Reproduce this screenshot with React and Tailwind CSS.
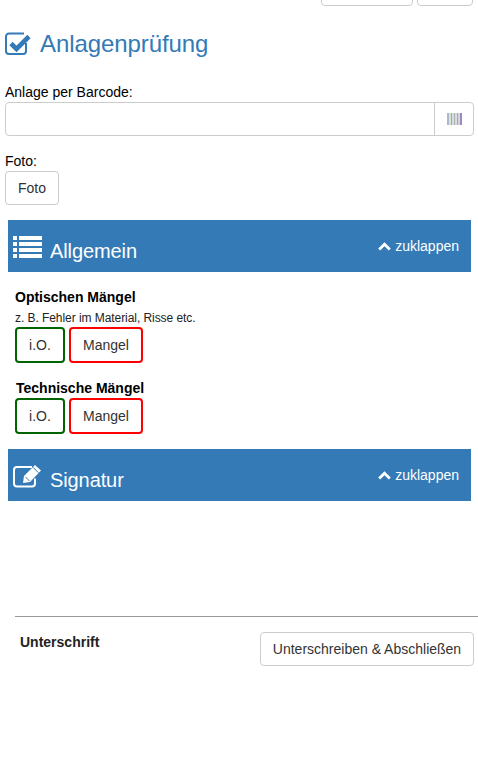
function CheckIcon() {
    return (
        <svg width="27" height="24" viewBox="0 0 27 24" fill="none" className="shrink-0">
            <path d="M21 11V19a3 3 0 0 1-3 3H4a3 3 0 0 1-3-3V4.500a3 3 0 0 1 3-3h15" stroke="currentColor" strokeWidth="2" />
            <path d="M6 11.500L11.500 17L24 4.500" stroke="currentColor" strokeWidth="4.600" />
        </svg>
    )
}

function ListIcon() {
    return (
        <svg width="29" height="22" viewBox="0 0 29 22" fill="white" className="shrink-0">
            <rect x="0" y="0" width="4" height="4" />
            <rect x="6" y="0" width="23" height="4" />
            <rect x="0" y="6" width="4" height="4" />
            <rect x="6" y="6" width="23" height="4" />
            <rect x="0" y="12" width="4" height="4" />
            <rect x="6" y="12" width="23" height="4" />
            <rect x="0" y="18" width="4" height="4" />
            <rect x="6" y="18" width="23" height="4" />
        </svg>
    )
}

function EditIcon() {
    return (
        <svg width="29" height="24" viewBox="0 0 29 24" fill="none" className="shrink-0">
            <path d="M22 14.500V19.500a3 3 0 0 1-3 3H4a3 3 0 0 1-3-3V6a3 3 0 0 1 3-3h15" stroke="white" strokeWidth="2" />
            <path d="M11 12L22 1L28 6.500L17 18L10 19Z" fill="white" />
            <path d="M20 3.300L25.500 8.800" stroke="#337ab7" strokeWidth="1" />
            <path d="M12.500 13L16.500 17" stroke="#337ab7" strokeWidth="1" />
        </svg>
    )
}

function ChevronUp() {
    return (
        <svg width="13" height="9" viewBox="0 0 13 9" fill="none" className="mr-[4px] shrink-0">
            <path d="M1.200 7.500L6.500 2.200L11.800 7.500" stroke="white" strokeWidth="2.800" />
        </svg>
    )
}

function PanelHeader({ icon, title, iconTop }) {
    return (
        <div className="mx-2 flex h-[52px] w-[463px] items-start justify-between bg-[#337ab7] text-white">
            <div className="flex items-start pl-[5px]">
                <div className={iconTop}>{icon}</div>
                <h2 className="ml-[8px] pt-[15px] text-[20px] leading-[32px] tracking-[-0.1px]">{title}</h2>
            </div>
            <div className="flex items-center pt-[18px] pr-3 text-sm leading-[17px]">
                <ChevronUp />
                zuklappen
            </div>
        </div>
    )
}

function CheckButtons() {
    return (
        <div className="flex gap-1">
            <button className="h-[36px] w-[50px] rounded border-2 border-[#006400] text-sm text-[#333]">i.O.</button>
            <button className="h-[36px] w-[74px] rounded border-2 border-[#ff0000] text-sm text-[#333]">Mangel</button>
        </div>
    )
}

function Barcode() {
    return (
        <svg width="15" height="12" viewBox="0 0 15 12">
            <rect x="0" width="2" height="12" fill="#a8bccb" />
            <rect x="2" width="2" height="12" fill="#dfe2d3" />
            <rect x="4" width="1" height="12" fill="#a5a5b8" />
            <rect x="5" width="2" height="12" fill="#d3dfea" />
            <rect x="7" width="1" height="12" fill="#a9b3a6" />
            <rect x="8" width="2" height="12" fill="#e0d8e0" />
            <rect x="10" width="1" height="12" fill="#9babc0" />
            <rect x="11" width="2" height="12" fill="#d0d7df" />
            <rect x="13" width="2" height="12" fill="#9a8ac0" />
        </svg>
    )
}

export default function App() {
    return (
        <div className="h-[772px] w-[478px] overflow-hidden bg-white font-['Liberation_Sans',Arial,sans-serif] text-sm text-black">
            {/* buttons cut off at top */}
            <div className="flex h-[6px] items-end justify-end gap-1 overflow-hidden pr-[5px]">
                <div className="h-[34px] w-[92px] shrink-0 rounded border border-[#ccc]"></div>
                <div className="h-[34px] w-[56px] shrink-0 rounded border border-[#ccc]"></div>
            </div>

            <div className="mt-[21px] flex h-[34px] items-center pl-[5px] text-[#337ab7]">
                <CheckIcon />
                <h1 className="ml-[8px] text-2xl leading-[34px] tracking-[-0.08px]">Anlagenprüfung</h1>
            </div>

            <div className="mt-[21px] px-[5px]">
                <label className="block leading-[20px]">Anlage per Barcode:</label>
                <div className="flex h-[34px] w-[469px] rounded border border-[#ccc]">
                    <input className="min-w-0 flex-1 outline-none" />
                    <span className="flex w-[39px] items-center justify-center border-l border-[#ccc]">
                        <Barcode />
                    </span>
                </div>
                <label className="mt-[15px] block leading-[20px]">Foto:</label>
                <button className="h-[34px] w-[54px] rounded border border-[#ccc] text-sm text-[#333]">Foto</button>
            </div>

            <div className="mt-[15px]">
                <PanelHeader icon={<ListIcon />} iconTop="pt-[16px]" title="Allgemein" />
            </div>

            <div className="mt-[17px] pl-[15px]">
                <div className="font-bold leading-[17px]">Optischen Mängel</div>
                <div className="mt-[3px] text-xs leading-[18px] tracking-[-0.06px] text-[#222]">z. B. Fehler im Material, Risse etc.</div>
                <CheckButtons />
                <div className="mt-[17px] pl-px font-bold leading-[17px]">Technische Mängel</div>
                <div className="mt-[1px]">
                    <CheckButtons />
                </div>
            </div>

            <div className="mt-[15px]">
                <PanelHeader icon={<EditIcon />} iconTop="pt-[15px]" title="Signatur" />
            </div>

            <div className="mt-[115px] ml-[15px] border-t border-[#999]"></div>
            <div className="mt-[15px] flex items-start justify-between pr-[4px] pl-[20px]">
                <div className="font-bold text-[#222]">Unterschrift</div>
                <button className="h-[34px] w-[214px] rounded border border-[#ccc] text-sm text-[#333]">Unterschreiben &amp; Abschließen</button>
            </div>
        </div>
    )
}
